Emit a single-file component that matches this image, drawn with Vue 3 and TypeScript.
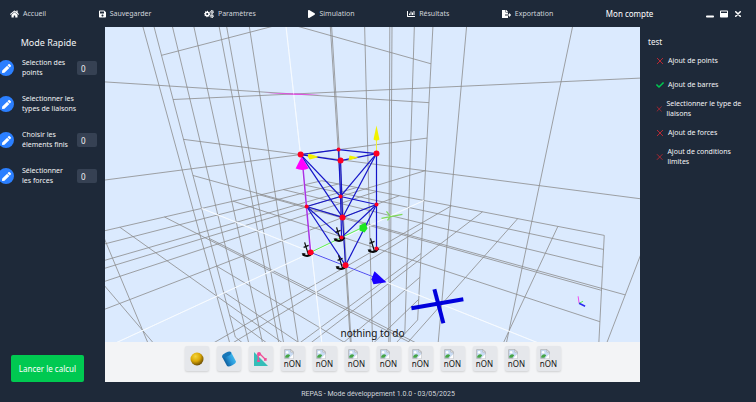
<script setup lang="ts">
import { ref } from 'vue'

interface NavItem { label: string; box: string; path: string }
interface Step { id: string; label: string; value: string | null }
interface Check { label: string; done: boolean }
interface Segment { x1: number; y1: number; x2: number; y2: number; axis: boolean }
type Vec = [number, number, number]

const gear = (cx: number, cy: number, r: number, teeth: number): string => {
  const pts: string[] = []
  for (let i = 0; i < teeth * 4; i++) {
    const a = (i / (teeth * 4)) * Math.PI * 2
    const k = i % 4 < 2 ? r : r * 0.78
    pts.push(`${(cx + Math.cos(a) * k).toFixed(1)} ${(cy + Math.sin(a) * k).toFixed(1)}`)
  }
  const h = r * 0.34
  return `M${pts.join('L')}ZM${cx - h} ${cy}a${h} ${h} 0 1 0 ${2 * h} 0a${h} ${h} 0 1 0 ${-2 * h} 0Z`
}

const nav: NavItem[] = [
  { label: 'Accueil', box: '0 0 576 512', path: 'M280.37 148.26L96 300.11V464a16 16 0 0 0 16 16l112.06-.29a16 16 0 0 0 15.92-16V368a16 16 0 0 1 16-16h64a16 16 0 0 1 16 16v95.64a16 16 0 0 0 16 16.05L464 480a16 16 0 0 0 16-16V300L295.67 148.26a12.19 12.19 0 0 0-15.3 0zM571.6 251.47L488 182.56V44.05a12 12 0 0 0-12-12h-56a12 12 0 0 0-12 12v72.61L318.47 43a48 48 0 0 0-61 0L4.34 251.47a12 12 0 0 0-1.6 16.9l25.5 31A12 12 0 0 0 45.15 301l235.22-193.74a12.19 12.19 0 0 1 15.3 0L530.9 301a12 12 0 0 0 16.9-1.6l25.5-31a12 12 0 0 0-1.7-16.93z' },
  { label: 'Sauvegarder', box: '0 0 448 512', path: 'M433.941 129.941l-83.882-83.882A48 48 0 0 0 316.118 32H48C21.49 32 0 53.49 0 80v352c0 26.51 21.49 48 48 48h352c26.51 0 48-21.49 48-48V163.882a48 48 0 0 0-14.059-33.941zM224 416c-35.346 0-64-28.654-64-64 0-35.346 28.654-64 64-64s64 28.654 64 64c0 35.346-28.654 64-64 64zm96-304.52V212c0 6.627-5.373 12-12 12H76c-6.627 0-12-5.373-12-12V108c0-6.627 5.373-12 12-12h228.52c3.183 0 6.235 1.264 8.485 3.515l3.48 3.48A11.996 11.996 0 0 1 320 111.48z' },
  { label: 'Paramètres', box: '0 0 640 512', path: gear(205, 256, 205, 8) + gear(510, 125, 125, 6) + gear(510, 390, 125, 6) },
  { label: 'Simulation', box: '0 0 448 512', path: 'M424.4 214.7L72.4 6.6C43.8-10.3 0 6.1 0 47.9V464c0 37.5 40.7 60.1 72.4 41.3l352-208c31.4-18.5 31.5-64.1 0-82.6z' },
  { label: 'Résultats', box: '0 0 512 512', path: 'M332.8 320h38.4c6.4 0 12.8-6.4 12.8-12.8V172.8c0-6.4-6.4-12.8-12.8-12.8h-38.4c-6.4 0-12.8 6.4-12.8 12.8v134.4c0 6.4 6.4 12.8 12.8 12.8zm96 0h38.4c6.4 0 12.8-6.4 12.8-12.8V76.8c0-6.4-6.4-12.8-12.8-12.8h-38.4c-6.4 0-12.8 6.4-12.8 12.8v230.4c0 6.4 6.4 12.8 12.8 12.8zm-288 0h38.4c6.4 0 12.8-6.4 12.8-12.8v-70.4c0-6.4-6.4-12.8-12.8-12.8h-38.4c-6.4 0-12.8 6.4-12.8 12.8v70.4c0 6.4 6.4 12.8 12.8 12.8zm96 0h38.4c6.4 0 12.8-6.4 12.8-12.8V108.8c0-6.4-6.4-12.8-12.8-12.8h-38.4c-6.4 0-12.8 6.4-12.8 12.8v198.4c0 6.4 6.4 12.8 12.8 12.8zM496 384H64V80c0-8.84-7.16-16-16-16H16C7.16 64 0 71.16 0 80v336c0 17.67 14.33 32 32 32h464c8.84 0 16-7.16 16-16v-32c0-8.84-7.16-16-16-16z' },
  { label: 'Exportation', box: '0 0 576 512', path: 'M384 121.9c0-6.3-2.5-12.4-7-16.9L279.1 7c-4.5-4.5-10.6-7-17-7H256v128h128zM571 308l-95.7-96.4c-10.1-10.1-27.4-3-27.4 11.3V288h-64v64h64v65.2c0 14.3 17.3 21.4 27.4 11.3L571 332c6.6-6.6 6.6-17.4 0-24zm-379 28v-32c0-8.8 7.2-16 16-16h176V160H248c-13.2 0-24-10.8-24-24V0H24C10.7 0 0 10.7 0 24v464c0 13.3 10.7 24 24 24h336c13.3 0 24-10.7 24-24V352H208c-8.8 0-16-7.2-16-16z' },
]

const steps = ref<Step[]>([
  { id: 'points', label: 'Selection des points', value: '0' },
  { id: 'liaisons', label: 'Selectionner les types de liaisons', value: null },
  { id: 'elements', label: 'Choisir les élements finis', value: '0' },
  { id: 'forces', label: 'Sélectionner les forces', value: '0' },
])

const checks: Check[] = [
  { label: 'Ajout de points', done: false },
  { label: 'Ajout de barres', done: true },
  { label: 'Selectionner le type de liaisons', done: false },
  { label: 'Ajout de forces', done: false },
  { label: 'Ajout de conditions limites', done: false },
]

// Camera: homogeneous projection of (x, z, y) grid coordinates.
const camera = {
  origin: [312, 253, 1] as Vec,
  x: [4.1, -9.77, -0.0889] as Vec,
  z: [-73.6, -13.8, -0.1204] as Vec,
  y: [-24.9, -58.96, -0.0643] as Vec,
}
const NEAR = 0.04

const toClip = (p: Vec): Vec =>
  [0, 1, 2].map((i) => camera.origin[i] + camera.x[i] * p[0] + camera.z[i] * p[1] + camera.y[i] * p[2]) as Vec

const segment = (from: Vec, to: Vec, axis: boolean): Segment | null => {
  let a = toClip(from)
  let b = toClip(to)
  if (a[2] < NEAR && b[2] < NEAR) return null
  const cut = (p: Vec, q: Vec): Vec => {
    const k = (NEAR - p[2]) / (q[2] - p[2])
    return [0, 1, 2].map((i) => p[i] + (q[i] - p[i]) * k) as Vec
  }
  if (a[2] < NEAR) a = cut(a, b)
  if (b[2] < NEAR) b = cut(b, a)
  return { x1: a[0] / a[2], y1: a[1] / a[2], x2: b[0] / b[2], y2: b[1] / b[2], axis }
}

const grid: Segment[] = []
const planes: [number, number][] = [[0, 1], [0, 2], [1, 2]]
for (const [u, v] of planes) {
  for (let i = -5; i <= 5; i++) {
    for (const [fixed, free] of [[u, v], [v, u]]) {
      const p: Vec = [0, 0, 0]
      const q: Vec = [0, 0, 0]
      p[fixed] = q[fixed] = i
      p[free] = -5
      q[free] = 5
      const s = segment(p, q, i === 0)
      if (s) grid.push(s)
    }
  }
}
grid.sort((a, b) => Number(a.axis) - Number(b.axis))

const joints: [number, number, number][] = [
  [339, 150, 2], [301, 155, 3], [377, 154, 3], [341, 161, 3],
  [341, 197, 2], [307, 207, 2], [377, 205, 2], [343, 218, 3],
  [342, 238, 2], [311, 253, 3], [377, 249, 2], [346, 266, 3],
]
const bars: [number, number][] = [
  [0, 1], [1, 3], [3, 2], [2, 0],
  [4, 5], [5, 7], [7, 6], [6, 4],
  [0, 4], [4, 8], [3, 7], [7, 11], [2, 6], [6, 10],
  [1, 4], [1, 7], [2, 4], [2, 7],
  [5, 8], [5, 11], [6, 8], [6, 11],
]
const anchors: [number, number][] = [[341, 237], [309, 252], [375, 248], [343, 265]]
const emptyTools = Array.from({ length: 9 }, (_, i) => i)
</script>

<template>
  <div class="app">
    <header class="topbar">
      <nav class="menu">
        <a v-for="item in nav" :key="item.label" href="#" class="menu-item">
          <svg class="menu-icon" :viewBox="item.box" aria-hidden="true"><path :d="item.path" fill-rule="evenodd" /></svg>
          <span>{{ item.label }}</span>
        </a>
        <a href="#" class="menu-item account">Mon compte</a>
        <div class="window-controls">
          <button type="button" aria-label="Réduire">
            <svg viewBox="0 0 512 512"><path d="M464 352H48c-26.5 0-48 21.5-48 48v32c0 26.5 21.5 48 48 48h416c26.5 0 48-21.5 48-48v-32c0-26.5-21.5-48-48-48z" /></svg>
          </button>
          <button type="button" aria-label="Agrandir">
            <svg viewBox="0 0 512 512"><path d="M464 32H48C21.5 32 0 53.5 0 80v352c0 26.5 21.5 48 48 48h416c26.5 0 48-21.5 48-48V80c0-26.5-21.5-48-48-48zm-16 160H64v-84c0-6.6 5.4-12 12-12h360c6.6 0 12 5.4 12 12v84z" /></svg>
          </button>
          <button type="button" aria-label="Fermer">
            <svg viewBox="0 0 512 512"><path d="M110 110L402 402M402 110L110 402" stroke="currentColor" stroke-width="100" stroke-linecap="round" /></svg>
          </button>
        </div>
      </nav>
    </header>

    <div class="body">
      <aside class="quick">
        <h1>Mode Rapide</h1>
        <ul class="steps">
          <li v-for="step in steps" :key="step.id">
            <button type="button" class="edit" :aria-label="step.label">
              <svg viewBox="0 0 512 512"><path d="M290.74 93.24l128.02 128.02-277.99 277.99-114.14 12.6C11.35 513.54-1.56 500.62.14 485.34l12.7-114.22 277.9-277.88zm207.2-19.06l-60.11-60.11c-18.75-18.75-49.16-18.75-67.91 0l-56.55 56.55 128.02 128.02 56.55-56.55c18.75-18.76 18.75-49.16 0-67.91z" /></svg>
            </button>
            <template v-if="step.value !== null">
              <label :for="step.id">{{ step.label }}</label>
              <input :id="step.id" v-model="step.value" type="text" />
            </template>
            <span v-else class="wide">{{ step.label }}</span>
          </li>
        </ul>
        <button type="button" class="run">Lancer le calcul</button>
      </aside>

      <main class="stage">
        <div class="scene">
          <svg viewBox="105 27 536 316" preserveAspectRatio="xMidYMid slice" role="img" aria-label="Structure 3D">
            <line v-for="(s, i) in grid" :key="i" :x1="s.x1" :y1="s.y1" :x2="s.x2" :y2="s.y2" :class="s.axis ? 'axis' : 'rule'" />

            <path d="M264 93L301 94L322 95L295 95Z" fill="#f03cf0" />
            <g class="letter-z"><path d="M382 219L403 215M387 212L391 217L388 221" /></g>
            <g class="letter-x"><path d="M412 309L464 300" /><path d="M435 290L444 324" /></g>

            <line x1="311" y1="253" x2="363" y2="228" stroke="#5cf04a" />
            <line x1="311" y1="253" x2="375" y2="278" stroke="#4a4af0" />
            <g class="bars">
              <line v-for="(b, i) in bars" :key="i" :x1="joints[b[0]][0]" :y1="joints[b[0]][1]" :x2="joints[b[1]][0]" :y2="joints[b[1]][1]" />
            </g>
            <line x1="303" y1="165" x2="311" y2="253" stroke="#a832e6" stroke-width="1.500" />
            <path d="M302 157L309 169Q303 172 296 169Z" fill="#ff00ff" />
            <path d="M360 226L366 223L368 229L365 233L360 231Z" fill="#1ee61e" />
            <path d="M375 272L387 283L374 285L372 280Z" fill="#1a00ff" />
            <line x1="377" y1="139" x2="377" y2="154" stroke="#f0f03c" />
            <path d="M377 126L380 140Q377 142 374 140Z" fill="#f2f200" />
            <path d="M309 154L318 157L318 158L310 160L308 157Z" fill="#f2f200" />
            <path d="M350 156L359 158L349 161Z" fill="#f2f200" />

            <g v-for="(a, i) in anchors" :key="i" class="anchor" :transform="`translate(${a[0]} ${a[1]})`">
              <path d="M-4 -9L0 4M-5 -4L0 -6" />
              <path d="M-6 3Q0 7 4 1" class="hook" />
              <path d="M-7 2L-3 2L-5 5Z" class="fluke" />
            </g>
            <circle v-for="(j, i) in joints" :key="i" :cx="j[0]" :cy="j[1]" :r="j[2]" fill="#ff0022" />

            <path d="M579 297L580 304" stroke="#f04af0" />
            <path d="M580 304L584 302" stroke="#5cf04a" />
            <path d="M580 304L586 307" stroke="#2a2af0" stroke-width="1.500" />
          </svg>
          <p class="status">nothing to do</p>
        </div>

        <div class="toolbar">
          <button type="button" class="tool" aria-label="Point">
            <svg viewBox="0 0 16 16">
              <defs>
                <radialGradient id="ball" cx="0.38" cy="0.3" r="0.75">
                  <stop offset="0" stop-color="#f4d53c" /><stop offset="0.5" stop-color="#dba806" /><stop offset="1" stop-color="#5c4002" />
                </radialGradient>
              </defs>
              <circle cx="8" cy="8" r="6.500" fill="url(#ball)" />
            </svg>
          </button>
          <button type="button" class="tool" aria-label="Barre">
            <svg viewBox="0 0 16 16">
              <defs>
                <linearGradient id="tube"><stop offset="0" stop-color="#0d5f9e" /><stop offset="0.6" stop-color="#2b9bdc" /><stop offset="1" stop-color="#3db4ea" /></linearGradient>
              </defs>
              <g transform="rotate(-28 8 8)">
                <path d="M3 3V13A5 2 0 0 0 13 13V3Z" fill="url(#tube)" /><ellipse cx="8" cy="3" rx="5" ry="2" fill="#1877b8" />
              </g>
            </svg>
          </button>
          <button type="button" class="tool" aria-label="Appui">
            <svg viewBox="0 0 16 16">
              <path d="M1 1V15H15Z" fill="#35bdb8" />
              <path d="M5 3L5.500 11M4 10H7M7 3L13 9M11 9L13 9L13 7" fill="none" stroke="#f04c96" stroke-width="1.300" /><circle cx="6" cy="3" r="2" fill="#f04c96" />
            </svg>
          </button>
          <button v-for="n in emptyTools" :key="n" type="button" class="tool missing">
            <svg viewBox="0 0 16 16" aria-hidden="true">
              <path d="M1 1H11L15 5V15H1Z" fill="#c9dcf5" stroke="#a3a3a3" />
              <path d="M11 1V5H15Z" fill="#fff" stroke="#a3a3a3" />
              <circle cx="5" cy="5" r="2" fill="#fff" />
              <path d="M2 14V11Q6 6 10 10L7 14Z" fill="#46a546" /><path d="M15 8L8 15H15Z" fill="#fff" />
            </svg>
            <span>nON</span>
          </button>
        </div>
      </main>

      <aside class="progress">
        <h2>test</h2>
        <ul>
          <li v-for="c in checks" :key="c.label">
            <svg v-if="c.done" class="ok" viewBox="0 0 512 512" aria-hidden="true"><path d="M173.898 439.404l-166.4-166.4c-9.997-9.997-9.997-26.206 0-36.204l36.203-36.204c9.997-9.998 26.207-9.998 36.204 0L192 312.690 432.095 72.596c9.997-9.997 26.207-9.997 36.204 0l36.203 36.204c9.997 9.997 9.997 26.206 0 36.204l-294.400 294.401c-9.998 9.997-26.207 9.997-36.204-.001z" /></svg>
            <svg v-else class="todo" viewBox="0 0 16 16" aria-hidden="true"><path d="M2 2L14 14M14 2L2 14" /></svg>
            <span>{{ c.label }}</span>
          </li>
        </ul>
      </aside>
    </div>

    <footer class="foot">REPAS - Mode développement 1.0.0 - 03/05/2025</footer>
  </div>
</template>

<style>
body { margin: 0; background: #1e2939; }
</style>

<style scoped>
* { box-sizing: border-box; }
.app { display: flex; flex-direction: column; min-height: 100vh; background: #1e2939; color: #f3f4f6; font-family: "Noto Sans", "Open Sans", sans-serif; font-size: 7px; line-height: 10px; }
button { margin: 0; padding: 0; border: 0; font: inherit; color: inherit; background: none; cursor: pointer; }
ul { list-style: none; margin: 0; padding: 0; }
h1, h2, p { margin: 0; font-weight: 400; }
svg { display: block; fill: currentColor; flex-shrink: 0; }

.topbar { padding: 0 14px 0 10px; }
.menu { display: flex; align-items: center; justify-content: space-between; height: 27px; }
.menu-item { display: flex; align-items: center; gap: 4px; color: #d1d5db; text-decoration: none; }
.menu-icon { height: 8px; color: #fff; }
.account { color: #fff; font-size: 8px; }
.window-controls { display: flex; gap: 6px; color: #fff; }
.window-controls svg { width: 8px; height: 8px; }

.body { flex: 1; display: grid; grid-template-columns: 105px minmax(0, 1fr) 116px; }
.quick { display: flex; flex-direction: column; overflow: hidden; }
.quick h1 { margin-top: 11px; padding-right: 8px; font-size: 9px; text-align: center; }
.steps { margin-top: 2px; }
.steps li { display: flex; align-items: center; gap: 8px; height: 36px; padding-right: 8px; }
.edit { display: grid; place-items: center; flex: none; width: 16px; height: 16px; margin-left: -2px; border-radius: 50%; background: #2b7fff; color: #fff; }
.edit svg { width: 9px; height: 9px; }
.steps label { width: 48px; }
.wide { width: 64px; }
.steps input { width: 20px; height: 14px; margin-left: auto; padding: 0 4px; border: 0; border-radius: 2px; background: #364153; color: #f3f4f6; font: inherit; font-size: 8px; }
.run { align-self: flex-start; margin: auto 0 0 11px; width: 73px; height: 27px; border-radius: 2px; background: #00c951; color: #fff; font-size: 8px; white-space: nowrap; }

.stage { display: flex; flex-direction: column; background: #f3f4f6; }
.scene { position: relative; flex: 1; overflow: hidden; background: #dbeafe; }
.scene svg { width: 100%; height: 100%; position: absolute; inset: 0; fill: none; }
.rule { stroke: #8c8c8c; stroke-width: 0.8; }
.axis { stroke: #f8fbff; stroke-width: 0.8; }
.bars { stroke: #1414c8; stroke-width: 1.2; }
.letter-z { stroke: #7ed957; stroke-width: 1.2; }
.letter-x { stroke: #0000dc; stroke-width: 4; }
.anchor { stroke: #0a0a0a; stroke-width: 1.2; }
.hook { stroke-width: 2; }
.fluke { fill: #0a0a0a; stroke: none; }
.status { position: absolute; left: 0; right: 0; bottom: 2px; color: #111; font-size: 10px; line-height: 14px; text-align: center; }
.toolbar { display: flex; justify-content: center; gap: 8px; height: 40px; padding-top: 4px; }
.tool { display: flex; flex-direction: column; align-items: center; justify-content: center; width: 24px; height: 25px; border-radius: 2px; background: #e5e7eb; color: #111; box-shadow: 0 1px 2px rgba(0, 0, 0, 0.15); }
.tool svg { width: 16px; height: 16px; }
.tool.missing svg { width: 10px; height: 10px; margin-left: -7px; }
.missing span { font-size: 8px; }

.progress { padding: 10px 8px; }
.progress h2 { font-size: 8px; }
.progress ul { margin-top: 2px; padding-left: 8px; }
.progress li { display: flex; align-items: center; gap: 4px; height: 24px; }
.ok { width: 8px; height: 8px; color: #00c951; }
.todo { flex: 0 1 8px; min-width: 0; width: 8px; height: 8px; stroke: #c82832; stroke-width: 1.8; }

.foot { height: 20px; padding-top: 7px; color: #d1d5db; font-family: Roboto, "Noto Sans", sans-serif; text-align: center; }
</style>
